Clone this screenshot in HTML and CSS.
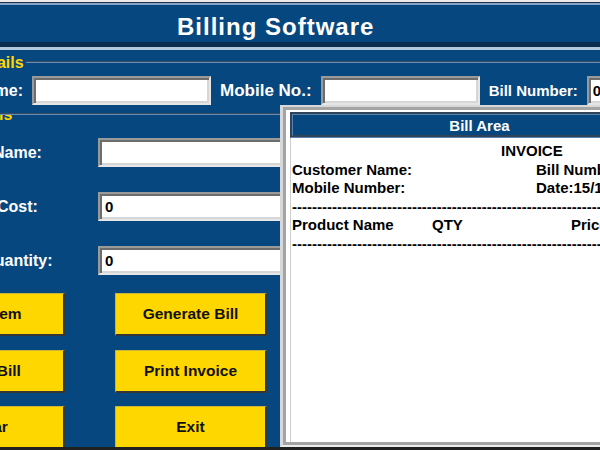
FILE: index.html
```html
<!DOCTYPE html>
<html>
<head>
<meta charset="utf-8">
<title>Billing Software</title>
<link rel="stylesheet" href="styles.css">
</head>
<body>
<div class="app">
  <div class="title">Billing Software</div>
  <div class="sep"></div>
  <div class="frame cust">
    <div class="legend leg-cust">Customer Details</div>
    <div class="crow">
      <span class="lbl">Customer Name:</span>
      <span class="entry e-name"></span>
      <span class="lbl lbl-mob">Mobile No.:</span>
      <span class="entry e-mob"></span>
      <span class="lbl lbl-bill">Bill Number:</span>
      <span class="entry e-bill">0</span>
    </div>
  </div>
  <div class="main">
    <div class="frame prod">
      <div class="legend leg-prod">Product Details</div>
      <div class="prows">
        <div class="prow"><span class="plbl">Product Name:</span><span class="entry pe"></span></div>
        <div class="prow"><span class="plbl">Product Cost:</span><span class="entry pe">0</span></div>
        <div class="prow"><span class="plbl">Product Quantity:</span><span class="entry pe">0</span></div>
      </div>
      <div class="btns">
        <div class="btn">Add Item</div>
        <div class="btn">Generate Bill</div>
        <div class="btn">Save Bill</div>
        <div class="btn">Print Invoice</div>
        <div class="btn">Clear</div>
        <div class="btn">Exit</div>
      </div>
    </div>
    <div class="billframe">
      <div class="billinner">
        <div class="billtitle">Bill Area</div>
        <div class="billtext">
          <div class="tl"><span class="inv">INVOICE</span></div>
          <div class="tl"><span class="c-left">Customer Name:</span><span>Bill Number:</span></div>
          <div class="tl"><span class="c-left">Mobile Number:</span><span>Date:15/11/2024</span></div>
          <div class="tl dash">------------------------------------------------------------------------------------------------------------</div>
          <div class="tl"><span class="c-prod">Product Name</span><span class="c-qty">QTY</span><span>Price</span></div>
          <div class="tl dash">------------------------------------------------------------------------------------------------------------</div>
        </div>
      </div>
    </div>
  </div>
  <div class="edge"></div>
</div>
</body>
</html>
```
FILE: styles.css
```css
html, body {
  margin: 0;
  width: 600px;
  height: 450px;
  overflow: hidden;
  background: #efebe6;
}
body {
  box-sizing: border-box;
  padding-top: 2px;
}
.app {
  margin-left: -120px;
  width: 795px;
  background: #07477f;
  font-family: "Liberation Sans", Arial, sans-serif;
  font-weight: bold;
}
.title {
  box-sizing: border-box;
  height: 45px;
  border-top: 1px solid #18324f;
  box-shadow: inset 0 2px 0 #86a3c6;
  border-bottom: 5px solid #0c2d50;
  color: #fff;
  font-size: 24px;
  letter-spacing: 1px;
  line-height: 31px;
  padding: 8px 0 0 297px;
  white-space: nowrap;
}
.sep {
  height: 3px;
  background: #b5c8de;
}
.frame {
  border-top: 2px groove #6a8db5;
}
.cust {
  margin-top: 11px;
}
.legend {
  width: fit-content;
  background: #07477f;
  color: #ffd700;
  font-size: 16px;
  line-height: 18px;
  padding-right: 2px;
  margin-top: -9px;
  white-space: nowrap;
}
.leg-cust { margin-left: 12px; }
.leg-prod { margin-left: 15px; }
.crow {
  display: flex;
  align-items: center;
  gap: 9px;
  height: 29px;
  margin: 4px 0 0 15px;
}
.lbl {
  flex: none;
  color: #fff;
  font-size: 16px;
  white-space: nowrap;
}
.lbl-mob { font-size: 17px; }
.lbl-bill { font-size: 15px; }
.entry {
  box-sizing: border-box;
  flex: none;
  height: 29px;
  background: #fff;
  border: 2px solid;
  border-color: #9a9a9a #e6e6e6 #e6e6e6 #9a9a9a;
  box-shadow: inset 2px 2px 0 #6d6d6d, inset -2px -2px 0 #d6d6d6;
  color: #000;
  font-size: 15px;
  line-height: 25px;
  padding-left: 4px;
}
.e-name { width: 179px; }
.e-mob { width: 159px; }
.e-bill { width: 80px; }
.main {
  display: flex;
  height: 342px;
}
.prod {
  flex: none;
  width: 400px;
  margin-top: 8px;
  overflow: hidden;
}
.prows {
  display: flex;
  flex-direction: column;
  gap: 25px;
  margin-top: 14px;
}
.prow {
  display: flex;
  align-items: center;
  height: 29px;
}
.plbl {
  flex: none;
  width: 200px;
  margin-left: 5px;
  text-align: center;
  color: #fff;
  font-size: 16px;
  white-space: nowrap;
}
.pe {
  width: 200px;
  margin-left: 13px;
  padding-left: 5px;
}
.btns {
  display: grid;
  grid-template-columns: 152px 152px;
  column-gap: 50px;
  row-gap: 13.5px;
  margin: 18px 0 0 33px;
}
.btn {
  box-sizing: border-box;
  height: 43px;
  background: #ffd700;
  border-top: 1px solid #c9b33a;
  border-left: 1px solid #c9b33a;
  border-right: 2px solid #363636;
  border-bottom: 2px solid #363636;
  color: #111;
  font-size: 15.5px;
  line-height: 40px;
  text-align: center;
  white-space: nowrap;
}
.billframe {
  flex: 1;
  min-width: 0;
  display: flex;
  border-top: 2px solid #d8d8d8;
  border-left: 3px solid #d8d8d8;
  border-right: 3px solid #d8d8d8;
  border-bottom: 2px solid #ececec;
}
.billinner {
  flex: 1;
  min-width: 0;
  display: flex;
  flex-direction: column;
  border: 3px solid #a4a4a4;
  background: #fff;
  padding: 2px 0 0 4px;
}
.billtitle {
  box-sizing: border-box;
  height: 26px;
  border: 3px groove #5c83ad;
  background: #07477f;
  color: #fff;
  font-size: 15px;
  line-height: 20px;
  padding-top: 1px;
  text-align: center;
}
.billtext {
  flex: 1;
  min-width: 0;
  background: #fff;
  border-left: 1px solid #cfcfcf;
  padding: 4px 0 0 1px;
  font-size: 15px;
  line-height: 18.5px;
  color: #000;
  overflow: hidden;
}
.tl {
  display: flex;
  white-space: nowrap;
  height: 18.5px;
}
.inv { padding-left: 209px; }
.c-left { width: 244px; flex: none; }
.c-prod { width: 140px; flex: none; }
.c-qty { width: 139px; flex: none; }
.dash { overflow: hidden; }
.edge {
  height: 3px;
  background: #202020;
}
```
